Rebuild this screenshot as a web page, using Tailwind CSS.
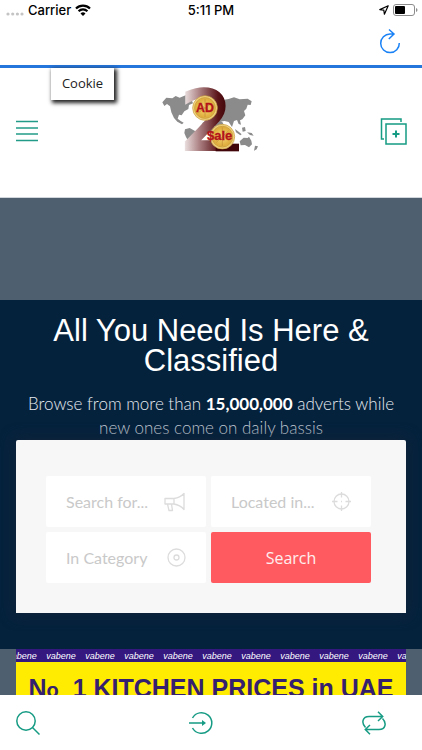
<!DOCTYPE html>
<html lang="en">
<head>
  <meta charset="UTF-8">
  <meta name="viewport" content="width=device-width, initial-scale=1.0">
  <title>AD 2 Sale</title>
  <script src="https://cdn.jsdelivr.net/npm/@tailwindcss/browser@4"></script>
</head>
<body class="h-screen flex flex-col overflow-hidden bg-white font-['Lato',sans-serif]">

  <!-- Status bar -->
  <div class="shrink-0 h-5 px-1 grid grid-cols-3 items-center text-[13px] leading-5 font-medium text-black font-['Inter',sans-serif]">
    <div class="flex items-center gap-1 pl-[2px]">
      <svg class="w-[18px] h-3" viewBox="0 0 18 12" fill="#c4c4c4">
        <circle cx="2" cy="10" r="1.600" /><circle cx="6.700" cy="10" r="1.600" /><circle cx="11.400" cy="10" r="1.600" /><circle cx="16" cy="10" r="1.600" />
      </svg>
      <span>Carrier</span>
      <svg class="w-4 h-3" viewBox="0 0 16 12" fill="none" stroke="#000" stroke-width="2.200">
        <path d="M1 4.500a10 10 0 0 1 14 0M3.600 7.300a6.200 6.200 0 0 1 8.800 0" />
        <path d="M8 12L5.500 9.400a3.600 3.600 0 0 1 5 0z" fill="#000" stroke="none" />
      </svg>
    </div>
    <span class="text-center">5:11 PM</span>
    <div class="flex items-center justify-end gap-1">
      <svg class="w-[10px] h-[10px]" viewBox="0 0 10 10" fill="none" stroke="#000" stroke-width="1.200" stroke-linejoin="round">
        <path d="M9.200.8L.8 4.600l4 .6.600 4z" />
      </svg>
      <svg class="w-[25px] h-3" viewBox="0 0 25 12">
        <rect x=".5" y=".5" width="21" height="11" rx="2.500" fill="none" stroke="#8c8c8c" />
        <rect x="2" y="2" width="10" height="8" rx="1" />
        <path d="M23 4v4q1.500-.6 1.500-2T23 4z" fill="#8c8c8c" />
      </svg>
    </div>
  </div>

  <!-- Browser toolbar -->
  <div class="shrink-0 h-12 px-5 pb-1 flex items-center justify-end border-b-3 border-[#2475dc]">
    <button type="button" aria-label="Reload">
      <svg class="w-6 h-6 overflow-visible" viewBox="0 0 24 24" fill="none" stroke="#1b82f5" stroke-width="1.500">
        <path d="M21.300 14a9.300 9.300 0 1 1-9.300-9h3.500M11 .5l5 4.500-5.200 5" />
      </svg>
    </button>
  </div>

  <!-- Site header -->
  <header class="relative shrink-0 h-[130px] pl-4 pr-[15px] pb-[3px] flex items-center justify-between bg-white border-b border-gray-300">
    <a href="#" class="absolute top-0 left-[51px] w-[63px] h-8 pt-px text-center text-[13px] leading-7 text-[#222] bg-white shadow-[2px_2px_4px_1px_#222] font-['Open_Sans',sans-serif]">Cookie</a>
    <button type="button" aria-label="Menu">
      <svg class="w-[22px] h-6" viewBox="0 0 22 24" stroke="#229c88" stroke-width="1.700">
        <path d="M0 2.500h22M0 9h22M0 15h22M0 21.500h22" />
      </svg>
    </button>
    <a href="#" aria-label="AD 2 Sale" class="pb-6">
      <svg class="w-[120px] h-20" viewBox="0 0 360 240">
        <defs>
          <linearGradient id="two" gradientUnits="userSpaceOnUse" x1="108" x2="240" y1="0" y2="0">
            <stop offset="0" stop-color="#eadede" />
            <stop offset=".35" stop-color="#a77b7d" />
            <stop offset=".75" stop-color="#5a1418" />
            <stop offset="1" stop-color="#3a0306" />
          </linearGradient>
          <radialGradient id="coin">
            <stop offset="0" stop-color="#f9d978" />
            <stop offset=".75" stop-color="#dfae3d" />
            <stop offset="1" stop-color="#f5e3a0" />
          </radialGradient>
        </defs>
        <g fill="#8b8b8b">
          <path d="M40 70l12-14 18 2 10-7 12 5 14-6 10-3 8 6-7 12 10-5 5 13-12 5-2 12-12 7-8 12-8-2-4 12 9 7 9 5-5 5-14-8-10-11-8-17-4-18-9-7-8 6z" />
          <path d="M108 50l14-9 22-3-4 18-14 10-8-8z" />
          <path d="M108 151l14-4 16 9 18 8 3 10-11 12-8 18-9 11-7-1-3-22-10-18-5-12z" />
          <path d="M160 132l20-14 22 3 18 8 8 15-7 18-10 22-12 2-9-20-10-13-17-3z" />
          <path d="M205 72l16-9 18-3 16-5 17 6 24-2 12 8-3 11-9-1-4 12-7 7 4 13-9 12-7 3 3 13-7-2-5-12-9 3-6 18-10-15-12-3-16 2-10-17z" />
          <path d="M258 150l12 9 8 7-4 3-13-9zM279 146l9-2 2 12-9 2zM294 160l14 2 6 8-11-2zM272 187l12-11 12 1 4-4 7 12 2 11-9 9-12-7-13 1zM318 200l9 2-4 9-8 4z" />
        </g>
        <text x="96" y="211" font-family="DejaVu Sans, sans-serif" font-size="240" stroke="url(#two)" stroke-width="12" fill="url(#two)">2</text>
        <rect x="200" y="194" width="70" height="23" fill="#3f0508" />
        <g fill="url(#coin)" stroke="#c6942f" stroke-width="2">
          <circle cx="168" cy="87" r="37" /><circle cx="168" cy="87" r="31" fill="none" />
          <circle cx="220" cy="173" r="37" /><circle cx="220" cy="173" r="31" fill="none" />
        </g>
        <path d="M168 60v54M148 73l40 28M188 73l-40 28M220 145v56M202 190l36-34" stroke="#c08c35" stroke-width="2" />
        <g fill="#b31319" stroke="#b31319" font-family="Liberation Sans, sans-serif" font-weight="700">
          <text x="141" y="100" font-size="37">AD</text>
          <text x="174" y="184" font-size="39">$ale</text>
        </g>
      </svg>
    </a>
    <button type="button" aria-label="Post an advert">
      <svg class="w-[27px] h-[27px]" viewBox="0 0 27 27" fill="none" stroke="#169b84" stroke-width="1.500">
        <path d="M4 21H1.500V1H21v3" />
        <rect x="6" y="6" width="20" height="20" />
        <path d="M16 12.500v7M12.500 16h7" stroke-width="2" />
      </svg>
    </button>
  </header>

  <main class="flex-1 min-h-0 overflow-hidden bg-[#4e5f70] pt-[102px]">
    <!-- Hero with search form -->
    <section class="bg-[#05223d] px-4 pt-4 pb-9 text-center text-white">
      <h1 class="text-[31px] leading-[30px] font-['Liberation_Sans',sans-serif]">All You Need Is Here &amp;<br>Classified</h1>
      <p class="mt-4 -mx-4 text-[17px] leading-6 font-light text-[#e6ebf0]">Browse from more than <b class="font-bold text-white">15,000,000</b> adverts while<br><span class="text-[#c6cdd5]">new ones come on daily bassis</span></p>

      <form class="relative rounded-t-[2px] bg-[#f7f7f7] pl-[30px] pr-[35px] pt-9 pb-[30px] grid grid-cols-2 gap-[5px] text-base text-left shadow-[0_0_14px_2px_#10233a]">
        <label class="h-[51px] min-w-0 flex items-center bg-white rounded-[2px] px-5">
          <input type="text" aria-label="Search for" placeholder="Search for..." class="min-w-0 flex-1 outline-none placeholder:text-[#c9c9c9]">
          <svg class="w-[22px] h-5 shrink-0" viewBox="0 0 22 20" fill="none" stroke="#dcdcdc" stroke-width="1.300" stroke-linejoin="round">
            <path d="M1 6.500h9q6-.8 10-5v16q-4-4.500-10-5.500H1zM10 6.500V12M3.500 12l1.500 6.500h3.500L7.500 12M20 1v17" />
          </svg>
        </label>
        <label class="h-[51px] min-w-0 flex items-center bg-white rounded-[2px] px-5">
          <input type="text" aria-label="Located in" placeholder="Located in..." class="min-w-0 flex-1 outline-none placeholder:text-[#c9c9c9]">
          <svg class="w-[19px] h-[19px] shrink-0" viewBox="0 0 19 19" fill="none" stroke="#dcdcdc" stroke-width="1.300">
            <circle cx="9.500" cy="9.500" r="7.500" />
            <path d="M9.500 0v5.500M9.500 13.500V19M0 9.500h5.500M13.500 9.500H19M9 9.500h1" />
          </svg>
        </label>
        <label class="h-[51px] min-w-0 flex items-center bg-white rounded-[2px] px-5">
          <input type="text" aria-label="In Category" placeholder="In Category" class="min-w-0 flex-1 outline-none placeholder:text-[#c9c9c9]">
          <svg class="w-[19px] h-[19px] shrink-0" viewBox="0 0 19 19" fill="none" stroke="#dcdcdc" stroke-width="1.300">
            <circle cx="9.500" cy="9.500" r="8.500" />
            <circle cx="9.500" cy="9.500" r="2.500" />
          </svg>
        </label>
        <button type="submit" class="h-[51px] rounded-[2px] bg-[#ff5a5f] text-white/90 font-['Open_Sans',sans-serif]">Search</button>
      </form>
    </section>

    <!-- Banner advert -->
    <a href="#" class="block mx-4 bg-[#ffec00] text-[#35206f] overflow-hidden whitespace-nowrap font-['Liberation_Sans',sans-serif]">
      <div class="h-[13px] -ml-[10px] flex gap-[7px] bg-[#35187f] text-[9px] leading-[14px] italic text-white">
        <span class="w-8 shrink-0 text-center">vabene</span>
        <span class="w-8 shrink-0 text-center">vabene</span>
        <span class="w-8 shrink-0 text-center">vabene</span>
        <span class="w-8 shrink-0 text-center">vabene</span>
        <span class="w-8 shrink-0 text-center">vabene</span>
        <span class="w-8 shrink-0 text-center">vabene</span>
        <span class="w-8 shrink-0 text-center">vabene</span>
        <span class="w-8 shrink-0 text-center">vabene</span>
        <span class="w-8 shrink-0 text-center">vabene</span>
        <span class="w-8 shrink-0 text-center">vabene</span>
        <span class="w-8 shrink-0 text-center">vabene</span>
      </div>
      <div class="pt-2 text-center text-[25px] leading-9 font-bold">N<span class="text-xl">o</span>&nbsp; 1 KITCHEN PRICES in UAE</div>
    </a>
  </main>

  <!-- Bottom navigation -->
  <nav class="shrink-0 h-[55px] px-4 flex items-center justify-between bg-white">
    <a href="#" aria-label="Search">
      <svg class="w-6 h-6" viewBox="0 0 24 24" fill="none" stroke="#169b84" stroke-width="1.500">
        <circle cx="10" cy="10" r="9.200" />
        <path d="M16.500 16.500l7 7" />
      </svg>
    </a>
    <a href="#" aria-label="Log in">
      <svg class="w-6 h-6" viewBox="0 0 24 24" fill="none" stroke="#169b84" stroke-width="1.500">
        <path d="M3.500 7a10.300 10.300 0 1 1 0 10M0 12h14" />
        <path d="M13 9l4 3-4 3z" fill="#169b84" stroke="none" />
      </svg>
    </a>
    <a href="#" aria-label="Refresh" class="pr-5">
      <svg class="w-6 h-6" viewBox="0 0 24 24" fill="none" stroke="#169b84" stroke-width="1.500">
        <path d="M3.500 16.500C-1 12 .5 5.500 7 5.500h13.500M16 .8l4.700 4.700L16 10" />
        <path d="M20.500 7.500C25 12 23.500 18.500 17 18.500H3.500M8 14l-4.700 4.500L8 23.200" />
      </svg>
    </a>
  </nav>

</body>
</html>
